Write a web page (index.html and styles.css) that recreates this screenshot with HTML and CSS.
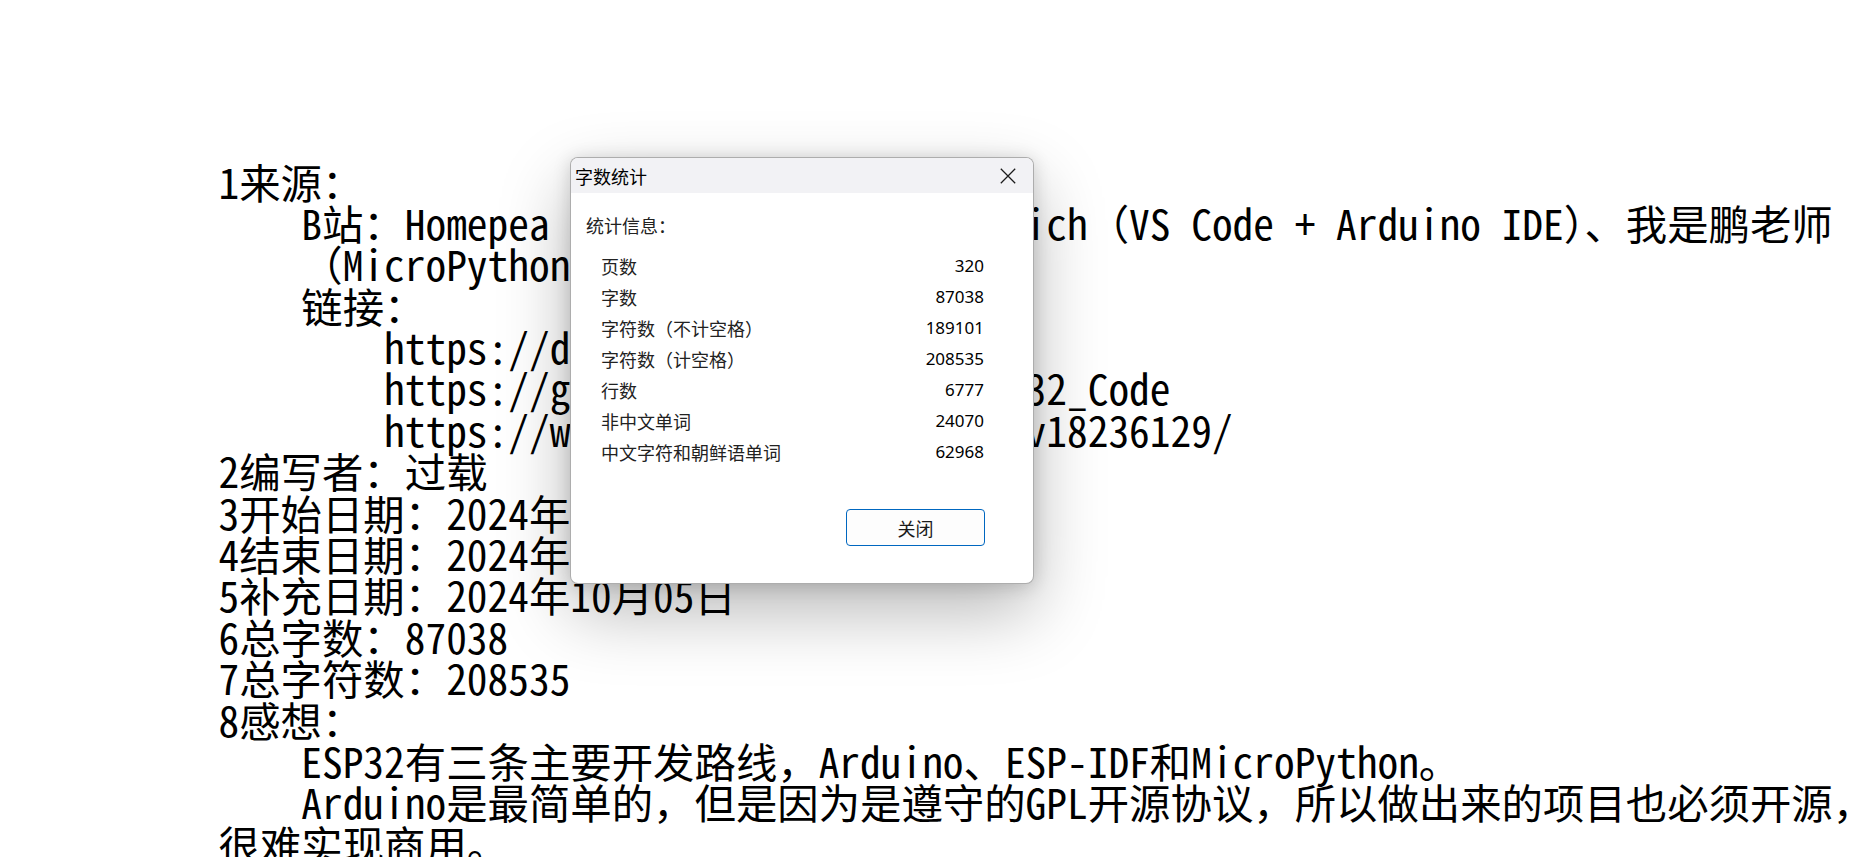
FILE: index.html
```html
<!DOCTYPE html>
<html lang="zh-CN">
<head>
<meta charset="utf-8">
<title>字数统计</title>
<link rel="stylesheet" href="styles.css">
</head>
<body>
<main class="doc">
<div class="line">1来源：</div>
<div class="line">    B站：Homepea Lab &amp; Maker Club Sandwich（VS Code + Arduino IDE）、我是鹏老师</div>
<div class="line">    （MicroPython）</div>
<div class="line">    链接：</div>
<div class="line">        https://docs.espressif.com/</div>
<div class="line">        https://github.com/Homepea7/ESP32_Code</div>
<div class="line">        https://www.bilibili.com/read/cv18236129/</div>
<div class="line">2编写者：过载</div>
<div class="line">3开始日期：2024年09月16日</div>
<div class="line">4结束日期：2024年10月04日</div>
<div class="line">5补充日期：2024年10月05日</div>
<div class="line">6总字数：87038</div>
<div class="line">7总字符数：208535</div>
<div class="line">8感想：</div>
<div class="line">    ESP32有三条主要开发路线，Arduino、ESP-IDF和MicroPython。</div>
<div class="line">    Arduino是最简单的，但是因为是遵守的GPL开源协议，所以做出来的项目也必须开源，</div>
<div class="line">很难实现商用。</div>
</main>

<section class="dialog">
  <header class="titlebar">
    <span class="title">字数统计</span>
    <span class="close">
      <svg width="16" height="16" viewBox="0 0 16 16"><path d="M0.8 0.8 L15.2 15.2 M15.2 0.8 L0.8 15.2" stroke="#1b1b1b" stroke-width="1.25" fill="none"/></svg>
    </span>
  </header>
  <div class="body">
    <div class="section">统计信息：</div>
    <div class="stats">
      <div class="row"><span class="label">页数</span><span class="num">320</span></div>
      <div class="row"><span class="label">字数</span><span class="num">87038</span></div>
      <div class="row"><span class="label">字符数（不计空格）</span><span class="num">189101</span></div>
      <div class="row"><span class="label">字符数（计空格）</span><span class="num">208535</span></div>
      <div class="row"><span class="label">行数</span><span class="num">6777</span></div>
      <div class="row"><span class="label">非中文单词</span><span class="num">24070</span></div>
      <div class="row"><span class="label">中文字符和朝鲜语单词</span><span class="num">62968</span></div>
    </div>
    <div class="actions"><button class="btn">关闭</button></div>
  </div>
</section>
</body>
</html>
```

FILE: styles.css
```css
html, body {
  margin: 0;
  padding: 0;
  background: #ffffff;
  overflow: hidden;
  width: 1869px;
  height: 857px;
}

.doc {
  padding: 160.5px 0 0 218.5px;
  font-family: "Noto Sans Mono CJK SC", "Noto Sans CJK SC", "Liberation Mono", monospace;
  font-size: 41.4px;
  line-height: 41.4px;
  color: #000000;
}

.line {
  white-space: pre;
  height: 41.4px;
}

.dialog {
  position: absolute;
  left: 570px;
  top: 157px;
  width: 464px;
  height: 427px;
  box-sizing: border-box;
  border: 1px solid rgba(0, 0, 0, 0.32);
  border-radius: 8px;
  background: #ffffff;
  overflow: hidden;
  box-shadow: 0 28px 70px rgba(0, 0, 0, 0.28), 0 2px 18px rgba(0, 0, 0, 0.16);
  display: flex;
  flex-direction: column;
  font-family: "Noto Sans CJK SC", "Noto Sans", sans-serif;
}

.titlebar {
  height: 35px;
  background: #f2f2f5;
  display: flex;
  align-items: center;
  justify-content: space-between;
  padding-left: 4px;
}

.title {
  font-size: 18px;
  line-height: 24px;
  color: #000000;
}

.close {
  width: 50px;
  height: 35px;
  display: flex;
  align-items: center;
  justify-content: center;
}

.close svg {
  display: block;
}

.body {
  flex: 1;
  display: flex;
  flex-direction: column;
  padding: 20px 48px 0 15px;
}

.section {
  font-size: 18px;
  line-height: 24px;
  color: #222222;
}

.stats {
  margin-top: 13px;
  padding-left: 15px;
  padding-right: 1px;
}

.row {
  height: 31px;
  display: flex;
  align-items: center;
  justify-content: space-between;
}

.label {
  font-size: 18px;
  line-height: 24px;
  color: #222222;
}

.num {
  font-family: "Noto Sans", "Open Sans", sans-serif;
  font-size: 17px;
  line-height: 24px;
  color: #000000;
}

.actions {
  margin-top: 42px;
  display: flex;
  justify-content: flex-end;
}

.btn {
  width: 139px;
  height: 37px;
  box-sizing: border-box;
  border: 1px solid #0067c0;
  border-radius: 4px;
  background: #fdfdfd;
  font-family: "Noto Sans CJK SC", sans-serif;
  font-size: 18px;
  line-height: 24px;
  color: #1a1a1a;
  padding: 0;
}
```
